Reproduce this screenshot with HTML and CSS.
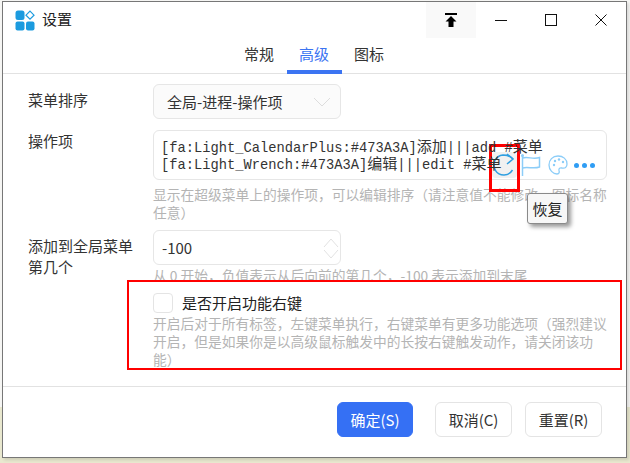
FILE: index.html
```html
<!DOCTYPE html>
<html lang="zh">
<head>
<meta charset="utf-8">
<title>设置</title>
<link rel="stylesheet" href="styles.css">
</head>
<body>
<div class="window">
  <header class="titlebar">
    <svg class="logo" viewBox="0 0 20 21" width="20" height="21">
      <rect x="0.5" y="0.5" width="9" height="9.5" rx="2.5" fill="#1c9bdf"/>
      <rect x="0.5" y="11.5" width="9" height="9" rx="2" fill="#1c9bdf"/>
      <rect x="11" y="11.5" width="8.5" height="9" rx="2" fill="#1c9bdf"/>
      <path d="M15 1.2 19 5.2 15 9.2 11 5.2Z" fill="none" stroke="#1c9bdf" stroke-width="1.2"/>
    </svg>
    <span class="title">设置</span>
    <div class="controls">
      <button class="ctl pin" aria-label="置顶">
        <svg viewBox="0 0 14 14" width="14" height="14"><path d="M1 0h12v2H1zM7 3 12.500 8.500H9.500V14h-5V8.500H1.500Z" fill="#000"/></svg>
      </button>
      <button class="ctl" aria-label="最小化">
        <svg viewBox="0 0 14 14" width="14" height="14"><path d="M1 7.500h12" stroke="#111" stroke-width="1"/></svg>
      </button>
      <button class="ctl" aria-label="最大化">
        <svg viewBox="0 0 14 14" width="14" height="14"><rect x="1.500" y="1.500" width="11" height="11" fill="none" stroke="#111" stroke-width="1"/></svg>
      </button>
      <button class="ctl" aria-label="关闭">
        <svg viewBox="0 0 14 14" width="14" height="14"><path d="M1.500 1.500 12.500 12.500M12.500 1.500 1.500 12.500" stroke="#111" stroke-width="1"/></svg>
      </button>
    </div>
  </header>

  <nav class="tabs">
    <a class="tab">常规</a>
    <a class="tab active">高级</a>
    <a class="tab">图标</a>
  </nav>

  <main class="form">
    <div class="row row-select">
      <label class="label">菜单排序</label>
      <div class="field">
        <div class="select">全局-进程-操作项
          <svg class="chev" viewBox="0 0 18 10" width="18" height="10"><path d="M1 1 9 9 17 1" fill="none" stroke="#ddd" stroke-width="1"/></svg>
        </div>
      </div>
    </div>

    <div class="row row-actions">
      <label class="label">操作项</label>
      <div class="field">
        <div class="textarea">
          <div class="code">[fa:Light_CalendarPlus:#473A3A]<span class="cjk">添加</span>|||add #<span class="cjk">菜单</span></div>
          <div class="code">[fa:Light_Wrench:#473A3A]<span class="cjk">编辑</span>|||edit #<span class="cjk">菜单</span></div>
          <div class="tools">
            <span class="tool tool-on">
              <svg viewBox="0 0 25 26" width="25" height="26"><path d="M21 7C19 4.500 15 3 11 3A10 10 0 1 0 20.500 18" fill="none" stroke="#2f9fe0" stroke-width="1.500"/><path d="M15 2 21 7 15 12" fill="none" stroke="#2f9fe0" stroke-width="1.500"/></svg>
            </span>
            <span class="tool">
              <svg viewBox="0 0 20 22" width="20" height="22"><path d="M1.500 1V22" stroke="#8ccdf8" stroke-width="1.500"/><circle cx="1.500" cy="1.500" r="1.500" fill="#8ccdf8"/><path d="M1.500 4C7 2 12 6 18.500 3.500V13C12 15.500 7 12 1.500 14" fill="none" stroke="#8ccdf8" stroke-width="1.500"/></svg>
            </span>
            <span class="tool">
              <svg viewBox="0 0 20 20" width="20" height="20"><path d="M10 1C4.500 1 1 5 1 10s4 9 8 9c2.500 0 2.500-2 2-3.500-.5-2 1-3 3-2.500 3 .5 5-.5 5-4 0-5-4-8-9-8Z" fill="none" stroke="#8ccdf8" stroke-width="1.300"/><circle cx="6" cy="10" r="1.200" fill="#8ccdf8"/><circle cx="7" cy="6" r="1.200" fill="#8ccdf8"/><circle cx="11" cy="4.500" r="1.200" fill="#8ccdf8"/><circle cx="15" cy="7" r="1.200" fill="#8ccdf8"/></svg>
            </span>
            <span class="tool dots"><i></i><i></i><i></i></span>
          </div>
        </div>
        <p class="help help-actions">显示在超级菜单上的操作项，可以编辑排序（请注意值不能修改，图标名称任意）</p>
      </div>
    </div>

    <div class="row row-number">
      <label class="label">添加到全局菜单第几个</label>
      <div class="field">
        <div class="select number">-100
          <svg class="spin" viewBox="0 0 16 26" width="16" height="26"><path d="M1 12 8 4 15 12M1 15 8 23 15 15" fill="none" stroke="#e2e2e2" stroke-width="1"/></svg>
        </div>
        <p class="help help-number">从 0 开始，负值表示从后向前的第几个，-100 表示添加到末尾</p>
      </div>
    </div>

    <div class="row row-check">
      <div class="label"></div>
      <div class="field">
        <label class="check"><span class="box"></span>是否开启功能右键</label>
        <p class="help help-check">开启后对于所有标签，左键菜单执行，右键菜单有更多功能选项（强烈建议开启，但是如果你是以高级鼠标触发中的长按右键触发动作，请关闭该功能）</p>
      </div>
    </div>
  </main>

  <footer class="footer">
    <button class="btn primary">确定(S)</button>
    <button class="btn gap-wide">取消(C)</button>
    <button class="btn">重置(R)</button>
  </footer>

  <div class="tooltip">恢复</div>
  <div class="mark mark-icon"></div>
  <div class="mark mark-row"></div>
</div>
</body>
</html>
```

FILE: styles.css
```css
* { box-sizing: border-box; }
html, body { margin: 0; height: 100%; }
body {
  width: 630px;
  height: 463px;
  overflow: hidden;
  padding: 1px 3px 5px 2px;
  background: linear-gradient(#f6f6f4 0 88%, #e9e8cf 88%);
  font-family: "Noto Sans CJK SC", "Noto Sans", sans-serif;
  font-size: 15px;
  color: #222;
}
.window {
  position: relative;
  width: 625px;
  height: 457px;
  background: #fff;
  border: 1px solid #777;
  display: flex;
  flex-direction: column;
  box-shadow: 2px 2px 3px rgba(0,0,0,.12);
}
.titlebar {
  height: 36px;
  flex: none;
  display: flex;
  align-items: center;
  padding-left: 12px;
}
.logo { flex: none; margin-right: 7px; }
.title { line-height: 20px; margin-top: -2px; color: #222; }
.controls { margin-left: auto; display: flex; height: 36px; }
.ctl {
  width: 50px;
  height: 36px;
  border: 0;
  padding: 0;
  background: none;
  display: flex;
  align-items: center;
  justify-content: center;
}
.pin { background: #f9f9f9; }
.tabs {
  height: 36px;
  flex: none;
  display: flex;
  justify-content: center;
  align-items: stretch;
  border-bottom: 1px solid #e2e2e2;
  padding-right: 1px;
}
.tab {
  width: 55px;
  padding-top: 6px;
  text-align: center;
  line-height: 20px;
  color: #333;
}
.tab.active {
  color: #3b74f2;
  border-bottom: 4px solid #3b74f2;
  margin-bottom: -1px;
}
.form { flex: 1; padding: 10px 19px 0 25px; min-height: 0; }
.row { display: flex; }
.label {
  width: 125px;
  flex: none;
  line-height: 21px;
  color: #333;
  padding-right: 12px;
}
.field { width: 454px; flex: none; }
.row-select { height: 46px; }
.row-select .label { padding-top: 5px; }
.select {
  position: relative;
  width: 188px;
  height: 35px;
  border: 1px solid #e6e6e6;
  border-radius: 6px;
  background: #fbfbfb;
  padding-left: 13px;
  line-height: 33px;
  color: #333;
}
.chev { position: absolute; right: 9px; top: 12px; }
.row-actions { height: 100px; }
.textarea {
  position: relative;
  height: 50px;
  border: 1px solid #e6e6e6;
  border-radius: 6px;
  padding: 7px 0 0 7px;
}
.code {
  position: relative;
  z-index: 1;
  height: 17px;
  font-family: "Liberation Mono", "Noto Sans CJK SC", monospace;
  font-size: 13.75px;
  line-height: 17px;
  white-space: pre;
  color: #333;
}
.cjk { font-family: "Noto Sans CJK SC", sans-serif; font-size: 15px; line-height: 1; }
.tools {
  position: absolute;
  left: 338px;
  top: 21px;
  display: flex;
  align-items: center;
  height: 26px;
}
.tool { width: 27px; display: flex; justify-content: center; align-items: center; height: 26px; }
.tool-on { background: #f1f1f1; border-radius: 4px; width: 25px; }
.dots { gap: 3px; }
.dots i { width: 5px; height: 5px; border-radius: 50%; background: #2f9df4; }
.help {
  margin: 0;
  font-size: 13.75px;
  line-height: 18px;
  color: #b4b4b4;
}
.help-actions { margin-top: 5px; }
.row-number { height: 51px; }
.row-number .label { padding-top: 5px; }
.number { background: #fff; padding-left: 8px; }
.spin { position: absolute; right: 1px; top: 4px; }
.help-number { margin-top: 1px; }
.row-check { position: relative; background: #fff; }
.check { display: flex; align-items: center; height: 20px; margin-top: 12px; color: #222; line-height: 20px; }
.box {
  width: 20px;
  height: 20px;
  border: 1px solid #e4e4e4;
  border-radius: 4px;
  margin-right: 9px;
  flex: none;
}
.help-check { margin-top: 1px; }
.footer {
  flex: none;
  height: 71px;
  border-top: 1px solid #e2e2e2;
  display: flex;
  align-items: flex-start;
  padding: 15px 0 0 334px;
  gap: 13px;
}
.btn {
  width: 77px;
  height: 35px;
  border: 1px solid #e4e4e4;
  border-radius: 6px;
  background: #fff;
  font: inherit;
  color: #333;
  padding: 0;
}
.primary { width: 76px; background: #3570f4; border-color: #3570f4; color: #fff; margin-right: 9px; }
.tooltip {
  position: absolute;
  left: 524px;
  top: 191px;
  width: 41px;
  height: 31px;
  border: 1px solid #8a8a8a;
  border-radius: 3px;
  background: #f7f7f7;
  box-shadow: 3px 3px 4px rgba(0,0,0,.4);
  text-align: center;
  line-height: 29px;
  color: #222;
}
.mark { position: absolute; border: 2px solid #f00; }
.mark-icon { left: 486px; top: 142px; width: 31px; height: 48px; border-width: 3px; }
.mark-row { left: 124px; top: 278px; width: 495px; height: 90px; }
```
